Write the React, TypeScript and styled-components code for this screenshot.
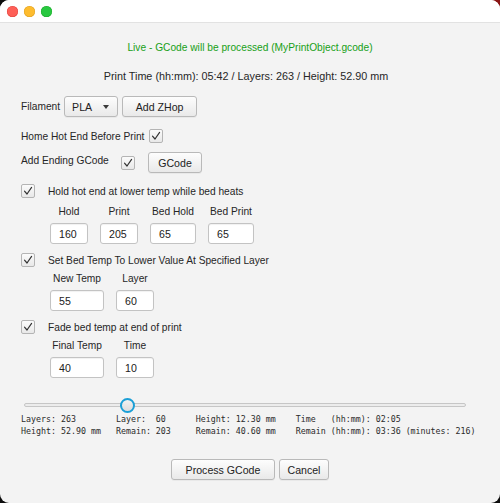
import React from "react";
import styled, { createGlobalStyle } from "styled-components";

const GlobalStyle = createGlobalStyle`
  html, body { margin: 0; padding: 0; }
  body {
    width: 500px;
    height: 503px;
    overflow: hidden;
    background: radial-gradient(circle at 100% 0, #8a1414 0 14px, #0d0d0d 15px);
    font-family: "Liberation Sans", Arial, sans-serif;
    font-size: 10.2px;
    color: #262626;
  }
`;

const Window = styled.div`
  width: 500px;
  height: 503px;
  border-radius: 9px;
  overflow: hidden;
  display: flex;
  flex-direction: column;
  background: #f3f3f3;
`;

const TitleBar = styled.div`
  height: 22px;
  flex: none;
  background: #ffffff;
  border-bottom: 1px solid #e2e2e2;
  display: flex;
  align-items: center;
  gap: 6px;
  padding-left: 7px;
`;

const Light = styled.span<{ $c: string; $b: string }>`
  width: 11px;
  height: 11px;
  border-radius: 50%;
  background: ${(p) => p.$c};
  box-shadow: inset 0 0 0 0.5px ${(p) => p.$b};
`;

const Body = styled.div`
  flex: 1;
  display: flex;
  flex-direction: column;
  padding: 17px 0 0 0;
`;

const Status = styled.div`
  height: 16px;
  line-height: 16px;
  text-align: center;
  color: #17a017;
`;

const Summary = styled.div`
  height: 16px;
  line-height: 16px;
  margin-top: 12px;
  padding-right: 8px;
  text-align: center;
  font-size: 10.8px;
  color: #262626;
`;

const Form = styled.div`
  display: flex;
  flex-direction: column;
  padding-left: 21px;
`;

const Row = styled.div<{ $mt: number; $gap?: number }>`
  display: flex;
  align-items: center;
  margin-top: ${(p) => p.$mt}px;
  gap: ${(p) => p.$gap ?? 4}px;
`;

const Label = styled.span<{ $w?: number; $dy?: number }>`
  white-space: nowrap;
  ${(p) => (p.$w ? `width: ${p.$w}px;` : "")}
  ${(p) => (p.$dy ? `position: relative; top: ${p.$dy}px;` : "")}
`;

const buttonSkin = `
  border: 1px solid #b9b9b9;
  border-radius: 3px;
  background: linear-gradient(#fdfdfd, #e9e9e9);
  box-shadow: 0 1px 0 rgba(0,0,0,0.04);
  font-family: "Liberation Sans", Arial, sans-serif;
  font-size: 10.6px;
  color: #222;
  box-sizing: border-box;
`;

const Button = styled.button<{ $w: number; $ml?: number }>`
  ${buttonSkin}
  width: ${(p) => p.$w}px;
  margin-left: ${(p) => p.$ml ?? 0}px;
  height: 21px;
  padding: 0;
  display: flex;
  align-items: center;
  justify-content: center;
`;

const Select = styled.div`
  ${buttonSkin}
  width: 54px;
  height: 21px;
  display: flex;
  align-items: center;
  justify-content: space-between;
  padding: 0 8px 0 7px;
`;

const Caret = styled.span`
  width: 0;
  height: 0;
  border-left: 3.5px solid transparent;
  border-right: 3.5px solid transparent;
  border-top: 4px solid #3a3a3a;
`;

const Box = styled.span`
  width: 14px;
  height: 14px;
  flex: none;
  box-sizing: border-box;
  border: 1px solid #b4b4b4;
  border-radius: 2px;
  background: linear-gradient(#fbfbfb, #e8e8e8);
  display: flex;
  align-items: center;
  justify-content: center;
`;

const Check = () => (
  <Box>
    <svg width="10" height="10" viewBox="0 0 10 10">
      <path d="M1.5 5.2 L4 8 L8.6 1.4" fill="none" stroke="#333" strokeWidth="1.2" strokeLinecap="round" strokeLinejoin="round" />
    </svg>
  </Box>
);

const FieldGrid = styled.div<{ $cols: string; $mt: number }>`
  display: grid;
  grid-template-columns: ${(p) => p.$cols};
  column-gap: 12px;
  row-gap: 4px;
  margin-left: 29px;
  margin-top: ${(p) => p.$mt}px;
`;

const ColLabel = styled.div`
  height: 14px;
  line-height: 14px;
  text-align: center;
  white-space: nowrap;
`;

const Input = styled.div`
  height: 21px;
  box-sizing: border-box;
  border: 1px solid #c3c3c3;
  border-radius: 3px;
  background: #fff;
  box-shadow: inset 0 1px 1px rgba(0, 0, 0, 0.06);
  display: flex;
  align-items: center;
  padding-left: 8px;
  font-size: 10.6px;
  color: #222;
`;

const SliderWrap = styled.div`
  position: relative;
  margin: 19px 0 0 24px;
  width: 442px;
  height: 16px;
  display: flex;
  align-items: center;
`;

const Track = styled.div`
  width: 100%;
  height: 4px;
  box-sizing: border-box;
  border: 1px solid #c6c6c6;
  border-radius: 3px;
  background: #ececec;
`;

const Thumb = styled.div`
  position: absolute;
  top: 0.5px;
  width: 15px;
  height: 15px;
  box-sizing: border-box;
  border: 2px solid #1b9fd6;
  border-radius: 50%;
  background: linear-gradient(#f2f2f2, #dcdcdc);
`;

const Mono = styled.pre`
  margin: 0;
  padding-left: 21px;
  font-family: "DejaVu Sans Mono", "Liberation Mono", monospace;
  font-size: 8.3px;
  line-height: 12px;
  color: #2a2a2a;
`;

const Actions = styled.div`
  display: flex;
  justify-content: center;
  gap: 4px;
  margin-top: 22px;
`;

const stats =
  "Layers: 263        Layer:  60      Height: 12.30 mm    Time   (hh:mm): 02:05\n" +
  "Height: 52.90 mm   Remain: 203     Remain: 40.60 mm    Remain (hh:mm): 03:36 (minutes: 216)";

// slider value: layer 60 of 263
const sliderFraction = 59 / 262;
const TRACK_W = 442;
const THUMB_W = 15;

export default function App() {
  const thumbLeft = sliderFraction * (TRACK_W - THUMB_W) + 0.3;
  return (
    <>
      <GlobalStyle />
      <Window>
        <TitleBar>
          <Light $c="#fe5f57" $b="#e0443e" />
          <Light $c="#febc2e" $b="#dea123" />
          <Light $c="#28c840" $b="#1aab29" />
        </TitleBar>
        <Body>
          <Status>Live - GCode will be processed (MyPrintObject.gcode)</Status>
          <Summary>Print Time (hh:mm): 05:42 / Layers: 263 / Height: 52.90 mm</Summary>
          <Form>
            <Row $mt={12} $gap={4}>
              <Label>Filament</Label>
              <Select>
                <span>PLA</span>
                <Caret />
              </Select>
              <Button $w={75}>Add ZHop</Button>
            </Row>
            <Row $mt={12} $gap={5}>
              <Label>Home Hot End Before Print</Label>
              <Check />
            </Row>
            <Row $mt={9} $gap={0}>
              <Label $w={100} $dy={-2}>Add Ending GCode</Label>
              <Check />
              <Button $w={54} $ml={13}>GCode</Button>
            </Row>
            <Row $mt={11} $gap={13}>
              <Check />
              <Label>Hold hot end at lower temp while bed heats</Label>
            </Row>
            <FieldGrid $cols="38px 38px 46px 46px" $mt={7}>
              <ColLabel>Hold</ColLabel>
              <ColLabel>Print</ColLabel>
              <ColLabel>Bed Hold</ColLabel>
              <ColLabel>Bed Print</ColLabel>
              <Input>160</Input>
              <Input>205</Input>
              <Input>65</Input>
              <Input>65</Input>
            </FieldGrid>
            <Row $mt={9} $gap={13}>
              <Check />
              <Label>Set Bed Temp To Lower Value At Specified Layer</Label>
            </Row>
            <FieldGrid $cols="54px 38px" $mt={5}>
              <ColLabel>New Temp</ColLabel>
              <ColLabel>Layer</ColLabel>
              <Input>55</Input>
              <Input>60</Input>
            </FieldGrid>
            <Row $mt={9} $gap={13}>
              <Check />
              <Label>Fade bed temp at end of print</Label>
            </Row>
            <FieldGrid $cols="54px 38px" $mt={5}>
              <ColLabel>Final Temp</ColLabel>
              <ColLabel>Time</ColLabel>
              <Input>40</Input>
              <Input>10</Input>
            </FieldGrid>
          </Form>
          <SliderWrap>
            <Track />
            <Thumb style={{ left: thumbLeft }} />
          </SliderWrap>
          <Mono>{stats}</Mono>
          <Actions>
            <Button $w={104}>Process GCode</Button>
            <Button $w={50}>Cancel</Button>
          </Actions>
        </Body>
      </Window>
    </>
  );
}
